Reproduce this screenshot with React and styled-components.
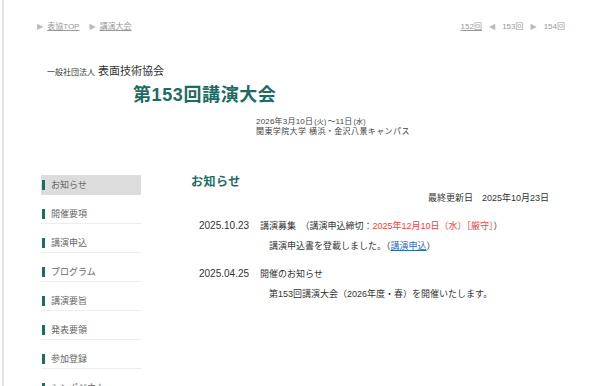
import React from "react";
import styled, { createGlobalStyle } from "styled-components";

const GlobalStyle = createGlobalStyle`
  html, body {
    margin: 0;
    padding: 0;
    background: #fff;
  }
  body {
    font-family: "Liberation Sans", "Noto Sans CJK JP", sans-serif;
    color: #333;
  }
  ul { margin: 0; padding: 0; list-style: none; }
`;

const App = () => {
  const menu = [
    "お知らせ",
    "開催要項",
    "講演申込",
    "プログラム",
    "講演要旨",
    "発表要領",
    "参加登録",
    "シンポジウム",
  ];

  const news = [
    {
      date: "2025.10.23",
      title: (
        <>
          講演募集　（講演申込締切：<Red>2025年12月10日（水）［厳守］</Red>）
        </>
      ),
      body: (
        <>
          講演申込書を登載しました。（<Link href="#">講演申込</Link>）
        </>
      ),
    },
    {
      date: "2025.04.25",
      title: "開催のお知らせ",
      body: "第153回講演大会（2026年度・春）を開催いたします。",
    },
  ];

  return (
    <Page>
      <GlobalStyle />
      <TopBar>
        <Crumbs>
          <Crumb>
            <Arrow>▶</Arrow>
            <a href="#">表協TOP</a>
          </Crumb>
          <Crumb>
            <Arrow>▶</Arrow>
            <a href="#">講演大会</a>
          </Crumb>
        </Crumbs>
        <Pager>
          <a href="#">152回</a>
          <Arrow>◀</Arrow>
          <span>153回</span>
          <Arrow>▶</Arrow>
          <span>154回</span>
        </Pager>
      </TopBar>

      <Org>
        <small>一般社団法人</small> 表面技術協会
      </Org>
      <Title>第153回講演大会</Title>
      <When>
        <WhenLine>
          2026年3月10日<Day>(火)</Day>～11日<Day>(水)</Day>
        </WhenLine>
        <WhenLine $wide>関東学院大学 横浜・金沢八景キャンパス</WhenLine>
      </When>

      <Main>
        <Side>
          {menu.map((item, i) => (
            <MenuItem key={i} $active={i === 0}>
              {item}
            </MenuItem>
          ))}
        </Side>
        <Content>
          <Heading>お知らせ</Heading>
          <Updated>最終更新日　2025年10月23日</Updated>
          {news.map((n, i) => (
            <NewsItem key={i}>
              <NewsHead>
                <NewsDate>{n.date}</NewsDate>
                <span>{n.title}</span>
              </NewsHead>
              <NewsBody>{n.body}</NewsBody>
            </NewsItem>
          ))}
        </Content>
      </Main>
    </Page>
  );
};

export default App;

const Page = styled.div`
  margin-left: 2px;
  border-left: 2px solid #e4e4e4;
  height: 386px;
  overflow: hidden;
  box-sizing: border-box;
`;

const TopBar = styled.div`
  display: flex;
  justify-content: space-between;
  padding: 22px 35px 0 33px;
  font-size: 8px;
  line-height: 10px;
  color: #999;

  a {
    color: #999;
    text-decoration: underline;
  }
`;

const Crumbs = styled.div`
  display: flex;
  gap: 10px;
`;

const Crumb = styled.div`
  display: flex;
  gap: 4px;
`;

const Arrow = styled.span`
  color: #bbb;
  font-size: 8px;
  font-family: "DejaVu Sans", sans-serif;
`;

const Pager = styled.div`
  display: flex;
  gap: 7px;
`;

const Org = styled.div`
  padding-left: 43px;
  margin-top: 32px;
  font-size: 11px;
  line-height: 14px;
  color: #333;

  small {
    font-size: 8px;
  }
`;

const Title = styled.h1`
  margin: 4px 0 0 129px;
  font-size: 18px;
  line-height: 22px;
  letter-spacing: 0.6px;
  font-weight: bold;
  color: #1d6b63;
`;

const When = styled.div`
  margin: 11px 0 0 252px;
  font-size: 8px;
  line-height: 10px;
  color: #444;
`;

const WhenLine = styled.div`
  letter-spacing: ${(p) => (p.$wide ? "0.4px" : "0.2px")};
`;

const Day = styled.span`
  font-size: 7px;
  margin: 0 1px;
`;

const Main = styled.div`
  display: flex;
  gap: 50px;
  margin-top: 29px;
  padding-left: 37px;
`;

const Side = styled.ul`
  width: 100px;
  flex-shrink: 0;
`;

const MenuItem = styled.li`
  display: flex;
  align-items: center;
  gap: 6px;
  margin-top: 9px;
  height: 20px;
  box-sizing: border-box;
  border-bottom: 1px solid ${(p) => (p.$active ? "#dcdcdc" : "#eeeeee")};
  background: ${(p) => (p.$active ? "#dcdcdc" : "transparent")};
  font-size: 9px;
  color: #666;

  &::before {
    content: "";
    width: 3px;
    height: 10px;
    margin-left: 1px;
    background: #1d6b63;
  }
`;

const Content = styled.div`
  width: 358px;
  font-size: 9px;
  color: #333;
`;

const Heading = styled.h2`
  margin: 8px 0 0;
  font-size: 12px;
  line-height: 16px;
  letter-spacing: 0.5px;
  font-weight: bold;
  color: #1d6b63;
`;

const Updated = styled.div`
  margin-top: 1px;
  text-align: right;
  line-height: 14px;
`;

const NewsItem = styled.div`
  margin-top: 14px;
  padding-left: 8px;
  line-height: 14px;
`;

const NewsHead = styled.div`
  display: flex;
`;

const NewsDate = styled.span`
  width: 61px;
  flex-shrink: 0;
  font-size: 10px;
`;

const NewsBody = styled.div`
  margin: 6px 0 0 70px;
`;

const Red = styled.span`
  color: #f43c3c;
`;

const Link = styled.a`
  color: #2a6ab8;
  text-decoration: underline;
`;
